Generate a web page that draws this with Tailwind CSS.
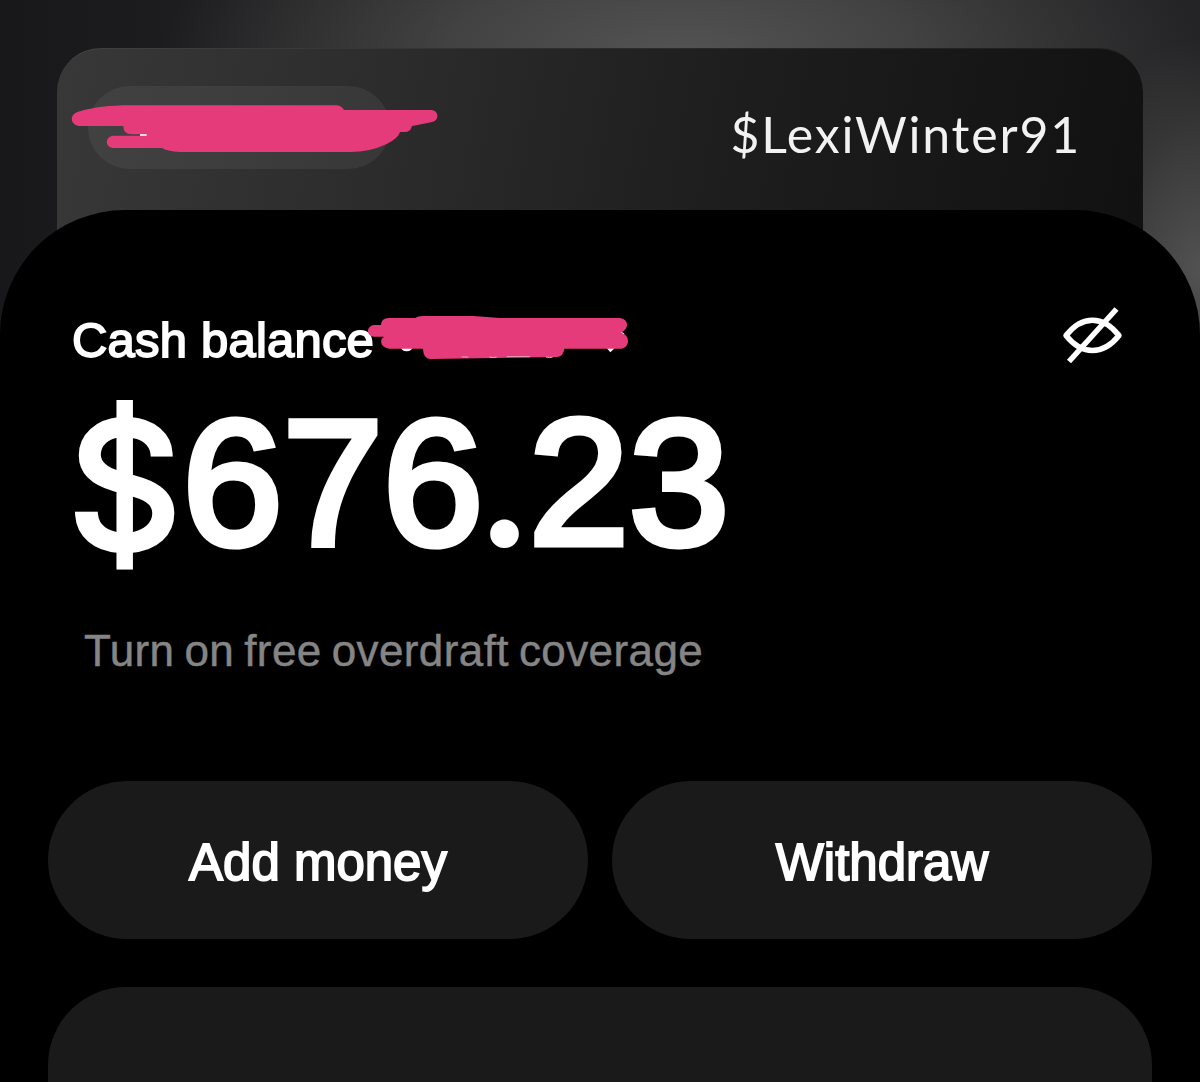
<!DOCTYPE html>
<html lang="en">
<head>
  <meta charset="UTF-8">
  <meta name="viewport" content="width=device-width, initial-scale=1.0">
  <title>Cash balance</title>
  <script src="https://cdn.jsdelivr.net/npm/@tailwindcss/browser@4"></script>
</head>
<body class="bg-black font-['Liberation_Sans',sans-serif] text-white">
<div class="relative h-[1082px] w-[1200px] overflow-hidden bg-[#19191b] bg-[radial-gradient(ellipse_520px_220px_at_680px_60px,#545454_0%,#424242_45%,transparent_100%),radial-gradient(ellipse_150px_230px_at_1200px_270px,#525252_0%,#3c3c3c_50%,transparent_100%),linear-gradient(90deg,#18181a_0%,#202022_25%,#242426_100%)] pt-12">

  <!-- Card -->
  <div class="mx-[57px] -mb-[38px] flex h-[200px] items-start justify-between rounded-t-[44px] border-t border-white/5 bg-linear-[100deg,#383838_0%,#2c2c2c_30%,#1e1e1e_60%,#111111_100%] pt-[37px] pr-[62px] pl-[31px]">
    <div class="relative h-[83px] w-[302px] rounded-full bg-white/6">
      <svg class="absolute top-[-16px] left-[-38px] h-[120px] w-[400px]" viewBox="0 0 1200 360">
        <path fill="#e63b7a" d="M86 168C58 162 58 130 90 124C130 112 180 106 240 106H860Q876 108 882 120H1144C1168 122 1168 152 1146 156Q1110 164 1086 168Q1082 186 1064 186H1050Q1046 204 1010 222Q960 246 900 246H390Q350 243 336 234H190C164 232 164 200 190 197H270V193H244Q220 192 220 168Z"/>
        <path fill="#ead9df" d="M270 192h20v6h-20z"/>
      </svg>
    </div>
    <p class="pt-[18px] font-['Lato',sans-serif] text-[50px] leading-[60px] tracking-[1.800px] text-[#f2f2f2]">$LexiWinter91</p>
  </div>

  <!-- Balance sheet -->
  <div class="relative h-[872px] rounded-t-[125px] bg-black px-12 pt-[94px]">
    <div class="flex justify-between pr-[29px] pl-6">
      <div class="relative">
        <h1 class="pt-[6px] text-[49px] leading-[60px] tracking-[0.200px] [-webkit-text-stroke:1.8px_white]">Cash balance</h1>
        <svg class="absolute top-[-4px] left-[278px] h-[80px] w-[300px]" viewBox="0 0 900 240">
          <circle cx="170" cy="134" r="20" fill="#fff"/>
          <path fill="#fff" d="M770 144l11 13 16-15 26-42-15-6z"/>
          <path fill="#e63b7a" d="M72 110C48 108 48 78 72 75H93Q94 54 116 54H196Q202 48 220 48H370L450 54H808C838 56 838 88 812 98C842 104 840 142 814 146H643Q640 171 620 171L240 177Q220 176 219 146H116Q94 142 93 124Q94 114 102 110Z"/>
          <path stroke="#e9a6bd" stroke-width="3" fill="none" d="M335 171h20M418 171q12 4 22 0M470 170h70M588 171q12 4 20 0"/>
        </svg>
      </div>
      <svg class="h-[62px] w-[62px]" viewBox="1061 304 62 62" fill="none" stroke="#fff" stroke-width="5.5" stroke-linejoin="round">
        <path d="M1066 335.500C1082 315 1103 315 1119 335.500C1103 355.500 1082 355.500 1066 335.500Z"/>
        <path d="M1069 361.500L1116.500 309"/>
      </svg>
    </div>

    <p class="flex h-[215px] origin-left scale-x-[1.012] items-baseline pl-[20px] text-[178px] leading-[210px] [-webkit-text-stroke:7px_white]"><span class="relative top-[4px] w-[113px] font-['Inter',sans-serif] text-[174px] font-normal [-webkit-text-stroke:6px_white]">$</span>676<span class="w-[45px] font-['Lato',sans-serif] [-webkit-text-stroke:6px_white]">.</span>23</p>

    <p class="mt-[36px] pl-[36px] text-[44px] leading-[60px] tracking-[0.400px] text-[#858585] [-webkit-text-stroke:0.5px_#858585] [word-spacing:-2.600px]">Turn on free overdraft coverage</p>

    <div class="mt-[100px] grid grid-cols-2 gap-6">
      <button class="h-[158px] rounded-full bg-[#1a1a1a] pt-[7px] text-[51px] [-webkit-text-stroke:1.8px_white]">Add money</button>
      <button class="h-[158px] rounded-full bg-[#1a1a1a] pt-[7px] text-[51px] [-webkit-text-stroke:1.8px_white]">Withdraw</button>
    </div>

    <div class="mt-12 h-[200px] rounded-t-[78px] bg-[#1a1a1a]"></div>
  </div>
</div>
</body>
</html>
